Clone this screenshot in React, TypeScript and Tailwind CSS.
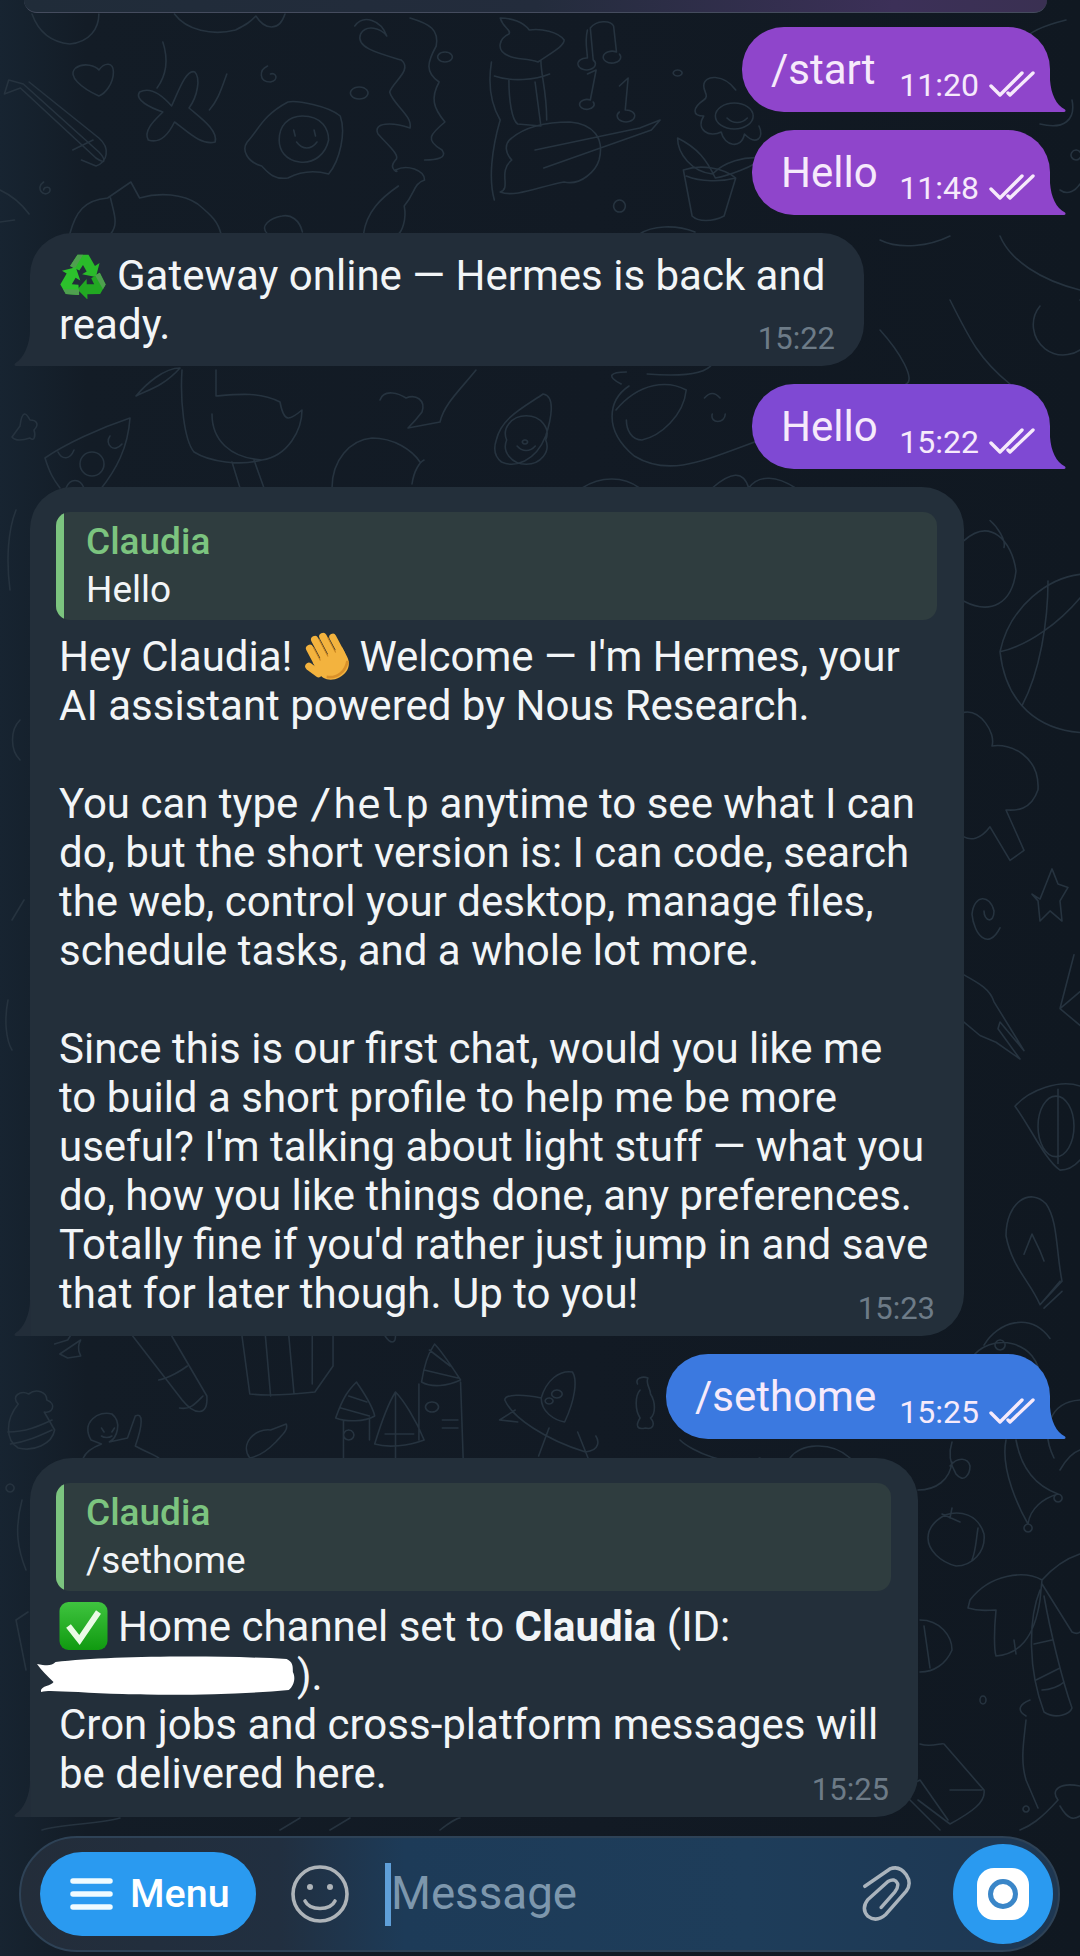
import React from "react";

const topRow = [
  "M22 14C26 30 34 42 48 44C62 42 68 28 68 14M120 14C128 30 146 36 162 30C170 24 172 22 176 16C182 30 192 32 196 14",
  "M6 80L3 94L14 88L66 158C74 166 72 158 68 152L16 84ZM20 82L68 138C76 148 74 162 66 166L56 160M50 150L64 140",
  "M68 96C56 88 46 76 52 68C58 62 66 66 68 70C72 62 78 62 78 72C78 84 72 94 68 96Z",
  "M112 42C116 60 114 76 108 88M156 74C152 90 150 100 144 110",
  "M96 92C104 86 112 96 118 106C122 94 128 68 134 72C138 78 136 96 130 108C138 118 150 130 148 142C138 146 128 130 120 122C116 134 110 144 102 140C98 130 108 118 112 112C104 108 92 100 96 92Z",
  "M184 66C178 70 178 82 186 82C192 80 190 72 186 74",
  "M198 102C204 100 226 106 234 116C238 132 234 160 226 174C216 170 206 172 198 178C188 180 184 172 180 166C170 162 166 150 170 142C178 130 180 116 198 102Z",
  "M208 116C222 116 226 130 226 140C224 154 216 164 206 162C196 160 192 150 192 140C192 126 198 116 208 116ZM202 130l1 6M216 130l1 6M204 142C208 150 214 150 218 142",
  "M244 26C250 14 262 20 266 36C262 28 252 24 248 34C244 48 262 54 276 60C284 70 270 82 268 92C270 104 284 116 282 128C270 122 256 122 260 134C266 144 276 156 272 160C266 170 276 174 272 170",
  "M282 18C296 24 302 30 300 46C294 62 292 72 302 82C296 98 298 108 306 122C296 134 292 140 304 150C308 158 300 160 292 160",
  "M272 170C280 164 292 170 292 180C284 184 286 192 278 206C280 220 276 232 274 234M250 234C252 212 262 198 274 186",
  "M344 18C346 28 352 30 350 34C344 38 340 50 350 56C356 60 362 58 370 62C380 52 388 46 388 40C384 32 372 28 364 30C360 22 352 18 344 18ZM338 62C336 80 336 100 344 120C338 150 336 180 340 200M372 60C372 76 376 90 376 120M340 76C352 82 368 80 378 74M350 80C350 100 352 120 356 124L372 126L368 82",
  "M352 160C342 172 352 188 344 192C354 198 372 186 388 182C400 186 410 170 412 160C416 138 408 124 392 122C376 122 362 126 352 138C346 144 348 154 352 160ZM368 150L440 128L454 120L448 130L374 168",
  "M404 30C402 42 404 52 404 58a6 6 0 1 0 4 2L406 28C410 20 420 20 422 26L424 52a6 6 0 1 0 2 2M404 74L410 70L406 100a5 5 0 1 0 2 2M426 86L432 78L430 110a6 6 0 1 1-4 2",
  "M506 90C498 74 484 74 484 86C484 92 488 96 484 100C476 108 476 116 484 116C478 130 488 138 496 132C498 146 510 150 512 134C520 146 526 138 522 126M492 116a13 13 0 1 0 26 0a13 13 0 1 0-26 0M500 118C504 124 510 124 514 118M492 178C486 160 480 148 466 138C466 154 476 172 490 174C498 162 512 156 524 158C520 166 500 176 492 178",
  "M470 170C482 164 498 168 506 178L498 216C490 222 480 222 476 216ZM472 176C482 182 496 182 506 178",
  "M48 234C52 212 58 200 74 198L90 182L96 198C110 192 126 194 136 204C146 216 150 222 152 234M76 198C78 212 82 224 76 234",
  "M184 234C178 226 186 218 194 216C200 214 206 220 208 232",
  "M440 234C448 226 464 224 478 232",
  "M20 214C14 202 6 194 0 190M10 220L0 222",
  "M247 87a6 6 0 1 0 .1 0ZM306 52a5 5 0 1 0 .1 0ZM466 70a3 3 0 1 0 .1 0ZM426 200a4 6 0 1 0 .1 0ZM30 182C24 188 30 198 34 192C36 186 30 186 30 190",
];

const plain = [
  "M880 240C900 250 930 246 950 236M1000 236C1010 260 1040 280 1080 290M1040 306a30 30 0 1 0 40 -6M880 330C900 352 916 380 906 384M950 300C970 340 980 360 1010 384",
  "M1066 20C1050 24 1030 30 1024 40M1072 100C1076 120 1064 130 1040 124M1076 150a5 5 0 1 0 .1 0M1060 190C1068 196 1076 190 1080 184",
  "M12 437L20 426C22 410 26 412 30 420C36 420 40 424 34 430C36 436 34 442 30 438C24 440 16 442 12 437Z",
  "M45 458C65 444 100 428 130 418C128 448 116 470 100 490M45 458C50 474 54 480 60 488M58 452C62 460 70 460 74 450M110 436C104 444 114 454 122 444M80 464a12 12 0 1 0 24 0a12 12 0 1 0-24 0M66 488C70 478 80 478 84 488",
  "M136 396C148 390 164 386 180 368C164 368 146 384 136 396ZM182 370C180 400 184 440 194 452C210 462 240 466 262 460C288 456 302 430 302 410C290 420 284 424 280 402C260 392 240 394 216 396M216 396V370M212 414C212 440 230 458 262 460M232 462L240 488M254 460L264 488",
  "M332 488C332 460 350 440 372 438C394 438 412 450 420 462M412 484C414 470 420 462 424 460",
  "M380 400C384 388 400 394 406 398C416 394 426 400 422 412C416 420 412 424 408 428L440 422C444 404 460 390 476 370",
  "M970 1360C990 1330 1040 1340 1040 1380M1000 1380a18 18 0 1 0 30 10M1000 1340a5 5 0 1 0 .1 0M1080 1400C1050 1402 1040 1430 1054 1458",
  "M680 1440C690 1450 730 1470 760 1458M790 1458C800 1444 830 1440 850 1458",
  "M918 1490C936 1490 950 1480 952 1462M952 1442C948 1454 950 1464 956 1474C964 1484 970 1474 970 1466C968 1458 958 1456 950 1466",
  "M1006 1440C1000 1470 1020 1510 1028 1524C1030 1508 1044 1498 1058 1494C1030 1484 1020 1462 1016 1440M1058 1494a4 4 0 1 0 .1 0M1028 1524a4 4 0 1 0 .1 0M1060 1470C1068 1456 1074 1452 1080 1450",
  "M945 1515C960 1510 978 1514 984 1534C986 1552 972 1566 956 1566C940 1562 928 1550 928 1538C928 1528 936 1520 945 1515ZM950 1518L952 1508M942 1514L960 1522M978 1528C976 1540 976 1550 972 1560",
  "M1042 1580C1024 1570 990 1574 970 1600L968 1608C980 1612 988 1610 996 1610C994 1630 994 1650 996 1656C1018 1654 1034 1640 1040 1600L1042 1580C1060 1560 1074 1556 1080 1554M1042 1584L1072 1632C1076 1634 1078 1634 1080 1632M1040 1590C1028 1620 1028 1670 1044 1712C1056 1720 1070 1714 1072 1708C1062 1680 1050 1630 1044 1596M1034 1644L1052 1640M1036 1680L1060 1668M1042 1690C1050 1690 1060 1686 1064 1682M1014 1640L1016 1654M1030 1700C1020 1704 1016 1710 1026 1716",
  "M920 1620C940 1620 952 1636 952 1650C946 1664 934 1672 920 1672M924 1626L930 1668",
  "M980 1700a3 4 0 1 0 6 0a3 4 0 1 0 -6 0M1026 1720C1024 1740 1020 1760 1026 1780M1026 1780L1038 1808",
  "M920 1744C932 1748 942 1742 944 1744L984 1790C986 1802 972 1812 950 1824L918 1800M950 1790L982 1790M940 1830L900 1790L920 1780L948 1820",
  "M1080 1786C1060 1782 1050 1790 1058 1800C1040 1820 1030 1826 1020 1830M1060 1806C1068 1820 1074 1820 1080 1816M1026 1806a3 3 0 1 0 .1 0",
  "M16 510C8 530 6 560 10 590M20 720C10 730 10 750 20 760M12 920L24 900M8 1000C4 1020 6 1040 12 1050M10 1484a4 4 0 1 0 .1 0M22 1500C14 1530 18 1550 26 1570M16 1620L28 1612M16 1620L26 1670",
  "M42 1830C60 1824 100 1824 120 1818M280 1830L300 1818M330 1830L350 1818M440 1830C450 1822 458 1818 460 1818",
];

const midRow = [
  "M474 440C478 418 494 408 510 394C520 396 516 420 512 436C504 462 488 468 478 462C472 456 472 448 474 440ZM482 440a16 18 0 1 0 30 0a16 18 0 1 0-30 0M490 446C494 452 500 452 504 446M496 440a2 2 0 1 0 .1 0",
  "M570 384C558 376 562 372 574 372M566 410C584 382 606 380 620 390C618 416 600 436 586 440C578 440 574 430 574 420M590 374C610 376 634 376 640 364M634 398C638 392 642 392 646 398M640 414C638 424 650 424 650 414M576 386C560 400 556 430 580 456C610 480 640 456 690 434",
  "M540 488C554 476 572 476 584 488M640 488C654 472 664 470 668 488C676 474 690 476 704 488",
];

const lowRow = [
  "M42 1344L52 1340L56 1332M62 1340C58 1350 62 1354 62 1356L52 1358L46 1354Z",
  "M102 1336L140 1400C150 1416 160 1416 159 1396L132 1336M122 1380C130 1378 140 1370 144 1366M138 1408C146 1410 150 1404 156 1396",
  "M186 1336L192 1394C205 1396 228 1394 242 1392L256 1366V1336M204 1336L208 1396M222 1336L226 1394M240 1336L240 1384",
  "M14 1404C8 1396 16 1390 22 1394C28 1388 36 1392 36 1400C44 1404 40 1414 34 1412L42 1430C40 1444 26 1452 14 1448C4 1440 4 1420 14 1404ZM6 1432C20 1432 30 1426 40 1420M8 1444C20 1442 30 1436 40 1430",
  "M70 1440C62 1422 76 1410 86 1414C94 1422 90 1438 84 1442L98 1438L104 1416C110 1412 110 1424 104 1446C112 1452 118 1454 122 1458M70 1440L78 1444C70 1448 66 1452 64 1458M78 1428L80 1432M88 1428L86 1432M78 1436C80 1438 84 1438 86 1436",
  "M192 1458C184 1444 196 1428 208 1430L220 1424C222 1430 216 1436 212 1442C206 1450 200 1456 192 1458Z",
  "M258 1418C264 1396 268 1390 274 1382C278 1390 286 1404 288 1416C280 1422 266 1422 258 1418ZM268 1396L282 1402M262 1408L284 1416M264 1420V1458M284 1418V1440M288 1444C296 1410 300 1400 304 1392C310 1400 320 1420 326 1440C314 1446 298 1448 288 1444ZM304 1392V1458M296 1434H318M324 1382C328 1350 334 1346 334 1344C340 1352 352 1376 354 1380C344 1386 332 1388 324 1382ZM330 1350L346 1366M326 1370L352 1378M322 1384V1440M354 1382L356 1458M340 1420L352 1420M340 1428L352 1428M332 1402a5 5 0 1 0 .1 0M268 1430a4 5 0 1 0 .1 0",
  "M416 1398C420 1380 430 1370 440 1372C444 1380 442 1400 434 1422C426 1420 416 1412 416 1398ZM416 1398C402 1394 388 1394 388 1400C394 1418 420 1440 450 1452C462 1450 460 1440 458 1436M396 1410L384 1420L398 1422M422 1428L414 1456M444 1432L452 1458M428 1390a4 4 0 1 0 .1 0M422 1398a3 3 0 1 0 .1 0",
  "M490 1384C488 1378 494 1376 498 1378C496 1384 500 1388 500 1394C504 1402 504 1414 500 1418C504 1424 502 1430 496 1428C490 1430 488 1426 492 1418C488 1410 488 1396 492 1390",
  "M296 1336C300 1344 304 1344 304 1336",
];

const rightStrip = [
  "M964 512C990 498 1012 512 1016 530C1012 550 990 556 964 548M990 500C998 504 1006 512 1004 516",
  "M1000 578C1010 550 1050 534 1080 532M1000 578C1006 610 1040 624 1080 626M1000 578C1030 574 1060 560 1080 546M1048 536C1048 560 1040 590 1022 610",
  "M964 614C980 612 996 626 992 634C1010 632 1040 640 1038 660C1030 674 1012 672 1006 672L1024 696L1010 702L990 682C980 690 970 690 964 688",
  "M1040 725L1046 716L1052 707L1058 716L1068 718L1060 726L1062 738L1050 732L1040 738L1038 726L1032 722Z",
  "M1000 742C988 756 974 746 972 734C974 722 990 722 994 732C994 740 984 738 984 732",
  "M964 770C976 774 990 778 994 786L1024 815L1000 798L998 802L1020 820L996 810L980 806L964 798",
  "M1074 758L1060 790L1080 800M1060 790L1080 780",
  "M1015 848C1030 838 1060 832 1080 836M1015 848C1030 860 1045 880 1060 886C1068 886 1074 884 1080 880M1038 860a18 18 0 1 0 36 0a18 18 0 1 0-36 0M1058 838V882",
  "M1006 925C1006 905 1030 896 1046 906C1058 916 1056 934 1062 952L1040 966C1030 952 1012 944 1006 925ZM1024 936L1032 924L1040 934L1044 940M1040 966L1060 952M1044 968L1062 958",
  "M984 990C998 976 1030 970 1050 986",
];

function Doodles({ paths, transform }: { paths: string[]; transform?: string }) {
  return (
    <g transform={transform}>
      {paths.map((d, i) => (
        <path key={i} d={d} vectorEffect="non-scaling-stroke" />
      ))}
    </g>
  );
}

function Ticks() {
  return (
    <svg width="46" height="28" viewBox="0 0 46 28" className="ml-[10px] shrink-0" fill="none" stroke="currentColor" strokeWidth="3.4" strokeLinecap="round" strokeLinejoin="round">
      <path d="M2 15L11 24L33 2" />
      <path d="M19 22L21 24L44 2" />
    </svg>
  );
}

function TailRight({ color }: { color: string }) {
  return (
    <svg width="17" height="32" viewBox="0 0 17 32" className="absolute left-full bottom-0 -ml-px" fill={color}>
      <path d="M0 0H1C2 14 7 25 16 29.5C17 30.5 16.5 32 15 32H0Z" />
    </svg>
  );
}

function TailLeft() {
  return (
    <svg width="17" height="36" viewBox="0 0 17 36" className="absolute right-full bottom-0 -mr-px" fill="#222d39">
      <path d="M17 0H16C16 14 10 28 1 33.5C0 34.5 .5 36 2 36H17Z" />
    </svg>
  );
}

function Out({ text, time, color, width }: { text: string; time: string; color: string; width: string }) {
  return (
    <div className="flex justify-end pr-[30px] shrink-0">
      <div className={`relative h-[85px] ${width} rounded-l-[42px] rounded-tr-[42px] flex items-start text-[#f6eafb] ${color === "#3b79e0" ? "bg-[#3b79e0]" : color === "#8f45cb" ? "bg-[#8f45cb]" : "bg-[#7f49d3]"}`}>
        <span className="absolute left-[29px] top-[18px] text-[42px] leading-[49px]">{text}</span>
        <div className="ml-auto mr-[15px] mt-[40px] flex items-center text-[32px] leading-[36px] h-[36px]">
          <span>{time}</span>
          <Ticks />
        </div>
        <TailRight color={color} />
      </div>
    </div>
  );
}

function Time({ t }: { t: string }) {
  return <span className="absolute right-[29px] bottom-[9px] text-[31px] leading-[36px] text-[#6d7b87]">{t}</span>;
}

function Reply({ name, text }: { name: string; text: string }) {
  return (
    <div className="relative h-[108px] rounded-[14px] bg-[#2f3d3f] overflow-hidden pl-[30px] pt-[6px]">
      <div className="absolute left-0 top-0 bottom-0 w-[8px] bg-[#7cc47f]" />
      <div className="text-[37px] leading-[48px] font-medium text-[#7cc47f]">{name}</div>
      <div className="text-[37px] leading-[48px] text-[#f2f5f7]">{text}</div>
    </div>
  );
}

function Recycle() {
  const arm = "M19 2H31L38 14L43 11L39 26L24 23L29 20L25 13L21 19L11 14Z";
  return (
    <svg width="48" height="46" viewBox="0 0 50 50" className="inline-block align-[-9px] mr-[10px]">
      <path d={arm} fill="#2abb2a" />
      <path d="M19 2H25L16 17L11 14Z" fill="#4f9f4f" />
      <path d={arm} fill="#22a822" transform="rotate(120 25 27)" />
      <path d="M19 2H25L16 17L11 14Z" fill="#4f9f4f" transform="rotate(120 25 27)" />
      <path d={arm} fill="#2cc12c" transform="rotate(240 25 27)" />
      <path d="M19 2H25L16 17L11 14Z" fill="#4f9f4f" transform="rotate(240 25 27)" />
    </svg>
  );
}

function Wave() {
  return (
    <svg width="54" height="52" viewBox="0 0 50 48" className="inline-block align-[-1px] ml-[10px] mr-[3px] -my-[10px]">
      <g transform="rotate(-28 25 24)" fill="#f3b33e">
        <rect x="9" y="6" width="7" height="24" rx="3.5" />
        <rect x="17" y="1" width="7" height="28" rx="3.5" />
        <rect x="25" y="2" width="7" height="28" rx="3.5" />
        <rect x="33" y="7" width="6.5" height="24" rx="3.2" />
        <rect x="3" y="20" width="7" height="18" rx="3.5" transform="rotate(-25 6 29)" />
        <path d="M9 22H39.5V32C39.5 41 33 46 24 46C15 46 9 40 9 32Z" />
        <path d="M16 10V24M24 6V24M32 8V24" stroke="#c9831f" strokeWidth="1" />
        <path d="M14 40C22 46 32 44 38 36" stroke="#d9912a" strokeWidth="2.5" fill="none" />
      </g>
    </svg>
  );
}

function Check() {
  return (
    <svg width="49" height="48" viewBox="0 0 48 48" className="inline-block align-[-3px] mr-[10px] -my-[6px]">
      <defs>
        <linearGradient id="g1" x1="0" y1="0" x2="0" y2="1">
          <stop offset="0" stopColor="#3fc43f" />
          <stop offset="1" stopColor="#109a10" />
        </linearGradient>
      </defs>
      <rect width="48" height="48" rx="9" fill="url(#g1)" />
      <path d="M9 24L20 38L39 10" fill="none" stroke="#eafbe6" strokeWidth="6" strokeLinejoin="miter" />
    </svg>
  );
}

export default function App() {
  return (
    <div className="relative w-[1080px] h-[1956px] overflow-hidden flex flex-col bg-[linear-gradient(90deg,#172431_0%,#131c26_8%,#121a24_55%,#101821_100%)] font-['Roboto',sans-serif] text-[#f2f5f7]">
      <svg width="1080" height="1956" viewBox="0 0 1080 1956" className="absolute inset-0" fill="none" stroke="#26333f" strokeWidth="1.6" strokeLinecap="round" strokeLinejoin="round">
        <Doodles paths={topRow} transform="scale(1.454 1)" />
        <Doodles paths={plain} />
        <Doodles paths={midRow} transform="translate(400 0) scale(1.301 1) translate(-400 0)" />
        <Doodles paths={lowRow} transform="scale(1.301 1)" />
        <Doodles paths={rightStrip} transform="translate(0 470) scale(1 1.683) translate(0 -470)" />
      </svg>

      <div className="relative flex flex-col h-[1836px] shrink-0">
        <div className="ml-[24px] mr-[33px] h-[13px] mb-[14px] shrink-0 rounded-b-[30px] border-b border-[#454c5e] bg-[linear-gradient(90deg,#202c39_0%,#232c3c_50%,#3c3058_85%,#3a3052_100%)]" />

        <div className="flex flex-col gap-[18px]">
          <Out text="/start" time="11:20" color="#8f45cb" width="w-[308px]" />
          <Out text="Hello" time="11:48" color="#8f45cb" width="w-[298px]" />

          <div className="pl-[30px]">
            <div className="relative w-[834px] h-[133px] rounded-[42px] rounded-bl-none bg-[#222d39] pl-[29px] pt-[18px] text-[42px] leading-[49px]">
              <Recycle />
              Gateway online — Hermes is back and
              <br />
              ready.
              <TailLeft />
              <Time t="15:22" />
            </div>
          </div>

          <Out text="Hello" time="15:22" color="#7f49d3" width="w-[298px]" />

          <div className="pl-[30px]">
            <div className="relative w-[934px] rounded-[42px] rounded-bl-none bg-[#232f3a] pl-[26px] pr-[27px] pt-[25px] pb-[18px]">
              <Reply name="Claudia" text="Hello" />
              <div className="mt-[12px] pl-[3px] text-[42px] leading-[49px] whitespace-nowrap">
                Hey Claudia!
                <Wave />
                Welcome — I'm Hermes, your
                <br />
                AI assistant powered by Nous Research.
                <br />
                <br />
                You can type <span className="font-['DejaVu_Sans_Mono',monospace] text-[40px] leading-none">/help</span> anytime to see what I can
                <br />
                do, but the short version is: I can code, search
                <br />
                the web, control your desktop, manage files,
                <br />
                schedule tasks, and a whole lot more.
                <br />
                <br />
                Since this is our first chat, would you like me
                <br />
                to build a short profile to help me be more
                <br />
                useful? I'm talking about light stuff — what you
                <br />
                do, how you like things done, any preferences.
                <br />
                Totally fine if you'd rather just jump in and save
                <br />
                that for later though. Up to you!
              </div>
              <TailLeft />
              <Time t="15:23" />
            </div>
          </div>

          <Out text="/sethome" time="15:25" color="#3b79e0" width="w-[384px]" />

          <div className="pl-[30px] mt-px">
            <div className="relative w-[888px] rounded-[42px] rounded-bl-none bg-[#232f3a] pl-[26px] pr-[27px] pt-[25px] pb-[19px]">
              <Reply name="Claudia" text="/sethome" />
              <div className="mt-[11px] pl-[3px] text-[42px] leading-[49px] whitespace-nowrap">
                <Check />
                Home channel set to <span className="font-bold">Claudia</span> (ID:
                <br />
                <svg width="260" height="40" viewBox="0 0 252 40" preserveAspectRatio="none" className="inline-block align-[0px] -ml-[22px] -my-[6px]" fill="#ffffff">
                  <path d="M0 8C10 10 14 10 18 6C70 0 170 -1 242 3C248 6 248 10 248 16C251 22 249 30 244 34C180 40 100 40 40 36C24 36 12 34 4 36C2 30 14 30 16 26C10 20 4 14 0 8Z" />
                </svg>
                ).
                <br />
                Cron jobs and cross-platform messages will
                <br />
                be delivered here.
              </div>
              <TailLeft />
              <Time t="15:25" />
            </div>
          </div>
        </div>
      </div>

      <div className="relative ml-[19px] mr-[20px] h-[116px] rounded-full border-2 border-[#2e4256] flex items-center pl-[19px] pr-[5px] bg-[linear-gradient(90deg,#232d3a_0%,#212f40_25%,#1d3b58_37%,#1e3d5a_70%,#1e3752_100%)]">
        <div className="w-[216px] h-[84px] rounded-full bg-[#2a9af0] flex items-center pl-[30px] text-white shrink-0">
          <svg width="43" height="32" viewBox="0 0 43 32" fill="none" stroke="#f0fbff" strokeWidth="5.5" strokeLinecap="round">
            <path d="M3 3H40M3 16H40M3 29H40" />
          </svg>
          <span className="ml-[17px] text-[39.5px] leading-none font-medium">Menu</span>
        </div>
        <svg width="60" height="62" viewBox="0 0 60 62" className="ml-[34px] shrink-0" fill="none" stroke="#aeb4b9" strokeWidth="3.6" strokeLinecap="round">
          <circle cx="30" cy="31" r="27" />
          <circle cx="20" cy="24" r="3" fill="#aeb4b9" stroke="none" />
          <circle cx="40" cy="24" r="3" fill="#aeb4b9" stroke="none" />
          <path d="M15 38C20 48 40 48 45 38" />
        </svg>
        <div className="w-[6px] h-[63px] bg-[#5f9fd8] ml-[35px] shrink-0" />
        <span className="text-[45.7px] leading-none text-[#7d97ad]">Message</span>
        <svg width="52" height="60" viewBox="-2 -2 54 62" className="ml-auto mr-[40px] shrink-0" fill="none" stroke="#aab4bd" strokeWidth="3.6" strokeLinecap="round" strokeLinejoin="round">
          <path d="M2 21L28 3Q38 -1 45 9Q51 18 45 26L24 50Q14 59 5 52Q-2 44 5 35L26 16Q33 12 36 18Q37 22 33 27L19 43" />
        </svg>
        <div className="w-[100px] h-[100px] rounded-full bg-[#2a9af0] flex items-center justify-center shrink-0">
          <svg width="52" height="52" viewBox="0 0 52 52">
            <rect width="52" height="52" rx="17" fill="#ffffff" />
            <circle cx="26" cy="26" r="12.5" fill="none" stroke="#3a86c8" strokeWidth="5" />
          </svg>
        </div>
      </div>
    </div>
  );
}
